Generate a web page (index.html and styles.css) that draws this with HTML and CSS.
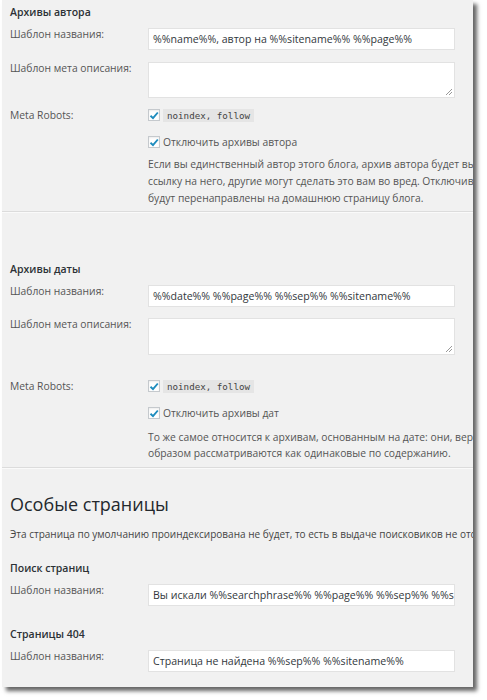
FILE: index.html
```html
<!DOCTYPE html>
<html lang="ru">
<head>
<meta charset="utf-8">
<title>Yoast</title>
<link rel="stylesheet" href="styles.css">
</head>
<body>
<div class="panel">
  <section class="block block-author">
    <h3 class="sub">Архивы автора</h3>
    <div class="row row-input">
      <div class="label">Шаблон названия:</div>
      <div class="field"><div class="input">%%name%%, автор на %%sitename%% %%page%%</div></div>
    </div>
    <div class="row row-textarea">
      <div class="label">Шаблон мета описания:</div>
      <div class="field"><div class="textarea"><svg class="grip" width="8" height="8" viewBox="0 0 8 8"><path d="M7 1L1 7M7 4L4 7" stroke="#999" stroke-width="1"/></svg></div></div>
    </div>
    <div class="row row-robots">
      <div class="label label-robots">Meta Robots:</div>
      <div class="field">
        <div class="check"><span class="cb"><svg width="10" height="9" viewBox="0 0 10 9"><path d="M1.5 4.8L4 7.2L8.8 1.5" fill="none" stroke="#1e8cbe" stroke-width="1.9"/></svg></span><code class="code">noindex, follow</code></div>
        <div class="check check2"><span class="cb"><svg width="10" height="9" viewBox="0 0 10 9"><path d="M1.5 4.8L4 7.2L8.8 1.5" fill="none" stroke="#1e8cbe" stroke-width="1.9"/></svg></span><span class="check-text">Отключить архивы автора</span></div>
        <p class="desc">Если вы единственный автор этого блога, архив автора будет выглядеть точно так же, как главная страница.<br>ссылку на него, другие могут сделать это вам во вред. Отключив их, архивы автора<br>будут перенаправлены на домашнюю страницу блога.</p>
      </div>
    </div>
  </section>
  <hr class="sep">

  <section class="block block-date">
    <h3 class="sub">Архивы даты</h3>
    <div class="row row-input">
      <div class="label">Шаблон названия:</div>
      <div class="field"><div class="input">%%date%% %%page%% %%sep%% %%sitename%%</div></div>
    </div>
    <div class="row row-textarea">
      <div class="label">Шаблон мета описания:</div>
      <div class="field"><div class="textarea tall"><svg class="grip" width="8" height="8" viewBox="0 0 8 8"><path d="M7 1L1 7M7 4L4 7" stroke="#999" stroke-width="1"/></svg></div></div>
    </div>
    <div class="row row-robots row-robots2">
      <div class="label label-robots">Meta Robots:</div>
      <div class="field">
        <div class="check"><span class="cb"><svg width="10" height="9" viewBox="0 0 10 9"><path d="M1.5 4.8L4 7.2L8.8 1.5" fill="none" stroke="#1e8cbe" stroke-width="1.9"/></svg></span><code class="code">noindex, follow</code></div>
        <div class="check check2"><span class="cb"><svg width="10" height="9" viewBox="0 0 10 9"><path d="M1.5 4.8L4 7.2L8.8 1.5" fill="none" stroke="#1e8cbe" stroke-width="1.9"/></svg></span><span class="check-text">Отключить архивы дат</span></div>
        <p class="desc desc2">То же самое относится к архивам, основанным на дате: они, вероятно, выглядят так же, как главная страница, и<br>образом рассматриваются как одинаковые по содержанию.</p>
      </div>
    </div>
  </section>
  <hr class="sep sep2">

  <section class="block block-special">
    <h2 class="title">Особые страницы</h2>
    <p class="intro">Эта страница по умолчанию проиндексирована не будет, то есть в выдаче поисковиков не отображается.</p>
    <h3 class="sub sub-search">Поиск страниц</h3>
    <div class="row row-input">
      <div class="label">Шаблон названия:</div>
      <div class="field"><div class="input">Вы искали %%searchphrase%% %%page%% %%sep%% %%sitename%%</div></div>
    </div>
    <h3 class="sub sub-404">Страницы 404</h3>
    <div class="row row-input">
      <div class="label">Шаблон названия:</div>
      <div class="field"><div class="input">Страница не найдена %%sep%% %%sitename%%</div></div>
    </div>
  </section>
</div>
</body>
</html>
```

FILE: styles.css
```css
html, body {
  margin: 0;
  padding: 0;
  background: #ffffff;
}
body {
  font-family: "Open Sans", "Noto Sans", sans-serif;
  font-size: 10.3px;
  color: #555;
  width: 487px;
  height: 700px;
  overflow: hidden;
}
.panel {
  margin-left: 2px;
  width: 471px;
  height: 687px;
  background: #f1f1f1;
  box-shadow: 4px 4px 4px rgba(0, 0, 0, 0.6);
  overflow: hidden;
  padding-left: 8px;
  box-sizing: border-box;
}
.block { margin: 0; }
.sub {
  margin: 0;
  font-size: 10.5px;
  line-height: 16px;
  font-weight: 600;
  color: #2c3136;
}
.block-author { padding-top: 4px; }
.block-date { padding-top: 48px; }
.row {
  display: grid;
  grid-template-columns: 138px 307px;
  align-items: start;
}
.row-input { margin-top: 8px; }
.row-textarea { margin-top: 12px; }
.block-date .row-textarea { margin-top: 11px; }
.row-robots { margin-top: 10px; }
.row-robots2 { margin-top: 24px; }
.label {
  line-height: 12px;
  color: #555;
  white-space: nowrap;
}
.label-robots { padding-top: 1px; }
.input {
  height: 22px;
  box-sizing: border-box;
  background: #fff;
  border: 1px solid #e2e2e2;
  padding: 0 4px;
  line-height: 20px;
  font-size: 10.6px;
  color: #32373c;
  white-space: nowrap;
  overflow: hidden;
}
.textarea {
  position: relative;
  height: 36px;
  box-sizing: border-box;
  background: #fff;
  border: 1px solid #e2e2e2;
}
.textarea.tall { height: 37px; }
.grip {
  position: absolute;
  right: 1px;
  bottom: 1px;
}
.check {
  display: flex;
  align-items: center;
  height: 14px;
  white-space: nowrap;
}
.check2 { margin-top: 13px; }
.cb {
  width: 12px;
  height: 12px;
  box-sizing: border-box;
  border: 1px solid #c5c9cd;
  background: #fff;
  display: flex;
  align-items: center;
  justify-content: center;
  flex: none;
  box-shadow: inset 0 1px 2px rgba(0,0,0,0.08);
}
.code {
  margin-left: 3px;
  background: #e5e5e5;
  font-family: "DejaVu Sans Mono", "Liberation Mono", monospace;
  font-size: 9.2px;
  line-height: 13px;
  padding: 0 4px;
  color: #444;
}
.check-text {
  margin-left: 3px;
  color: #555;
}
.desc {
  margin: 7px 0 0;
  line-height: 17px;
  white-space: nowrap;
  color: #555;
}
.desc2 { line-height: 16px; margin-top: 9px; }
.sep {
  margin: 4px 0 0 -8px;
  width: 471px;
  border: 0;
  border-top: 1px solid #dcdcdc;
  border-bottom: 1px solid #fafafa;
  height: 0;
}
.sep2 { margin-top: 6px; }
.block-special { padding-top: 22px; }
.title {
  margin: 0;
  font-size: 18px;
  line-height: 26px;
  font-weight: 400;
  color: #23282d;
}
.intro {
  margin: 10px 0 0;
  font-size: 10px;
  line-height: 14px;
  white-space: nowrap;
  color: #444;
}
.sub-search { margin-top: 19px; }
.sub-404 { margin-top: 20px; }
```
